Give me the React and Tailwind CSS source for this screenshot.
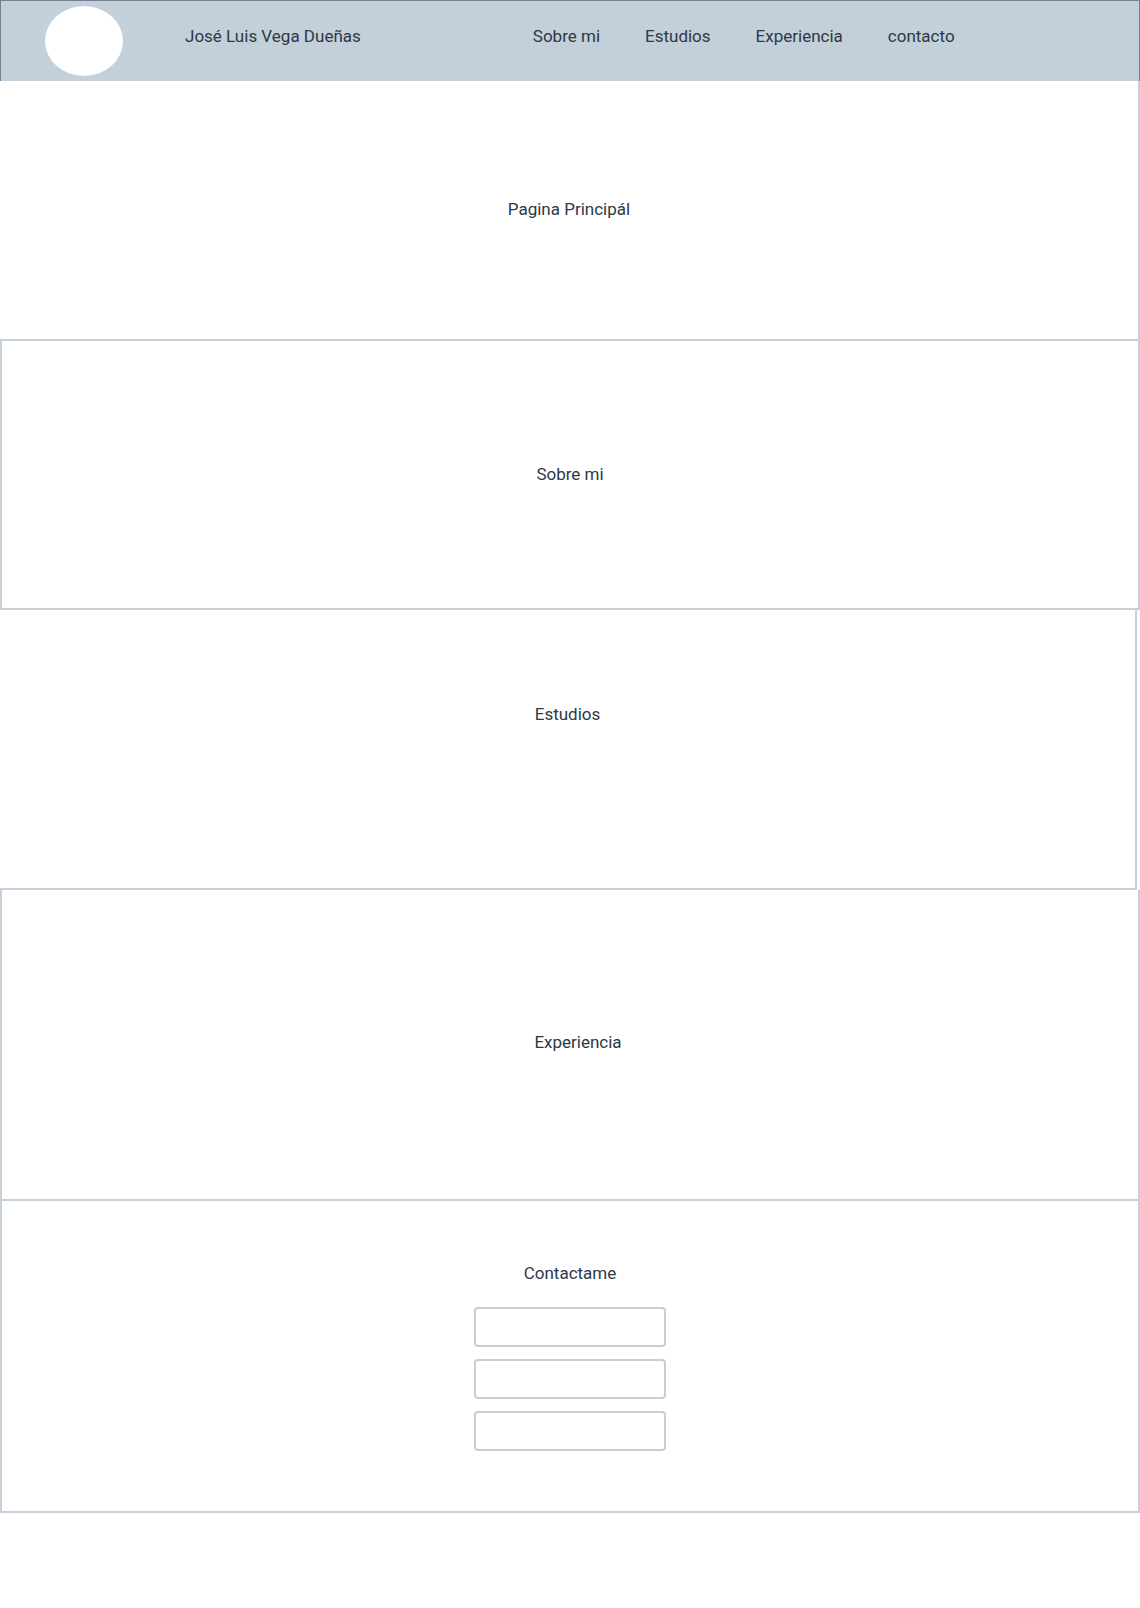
import React from 'react'

const navItems = ['Sobre mi', 'Estudios', 'Experiencia', 'contacto']

const Header = () => {
  return (
    <header className="h-[81px] flex items-center bg-[#c3cfd9] border-t border-l border-r border-[#708192]">
      <div className="ml-[44px] w-[78px] h-[70px] rounded-[50%] bg-white" />
      <p className="ml-[62px] mb-[8px] text-[17px] text-[#2d3847]">José Luis Vega Dueñas</p>
      <nav className="ml-[172px] mb-[8px] flex gap-[45px] text-[17px] text-[#2d3847]">
        {navItems.map((item) => (
          <a key={item} href="#">
            {item}
          </a>
        ))}
      </nav>
    </header>
  )
}

const App = () => {
  return (
    <div
      className="w-[1140px] min-h-[1608px] bg-white text-[17px] text-[#2d3847]"
      style={{ fontFamily: 'Roboto, "Noto Sans", sans-serif' }}
    >
      <Header />

      {/* Pagina principal */}
      <section className="h-[260px] flex items-center justify-center border-r-2 border-b-2 border-[#c6d1db]">
        <h2>Pagina Principál</h2>
      </section>

      {/* Sobre mi */}
      <section className="h-[269px] flex items-center justify-center border-l-2 border-r-2 border-b-2 border-[#c6d1db]">
        <h2>Sobre mi</h2>
      </section>

      {/* Estudios */}
      <section className="w-[1137px] h-[280px] flex justify-center pt-[92px] border-r-2 border-b-2 border-[#c6d1db]">
        <h2>Estudios</h2>
      </section>

      {/* Experiencia */}
      <section className="h-[311px] flex items-center justify-center pl-4 pb-[4px] border-l-2 border-r-2 border-b-2 border-[#c6d1db]">
        <h2>Experiencia</h2>
      </section>

      {/* Contacto */}
      <section className="h-[312px] flex flex-col items-center pt-[60px] border-l-2 border-r-2 border-b-2 border-[#c6d1db]">
        <h2>Contactame</h2>
        <form className="mt-[20px] flex flex-col gap-[12px]">
          <input className="w-[192px] h-[40px] rounded border-2 border-[#c6ced8] outline-none" />
          <input className="w-[192px] h-[40px] rounded border-2 border-[#c6ced8] outline-none" />
          <input className="w-[192px] h-[40px] rounded border-2 border-[#c6ced8] outline-none" />
        </form>
      </section>
    </div>
  )
}

export default App
